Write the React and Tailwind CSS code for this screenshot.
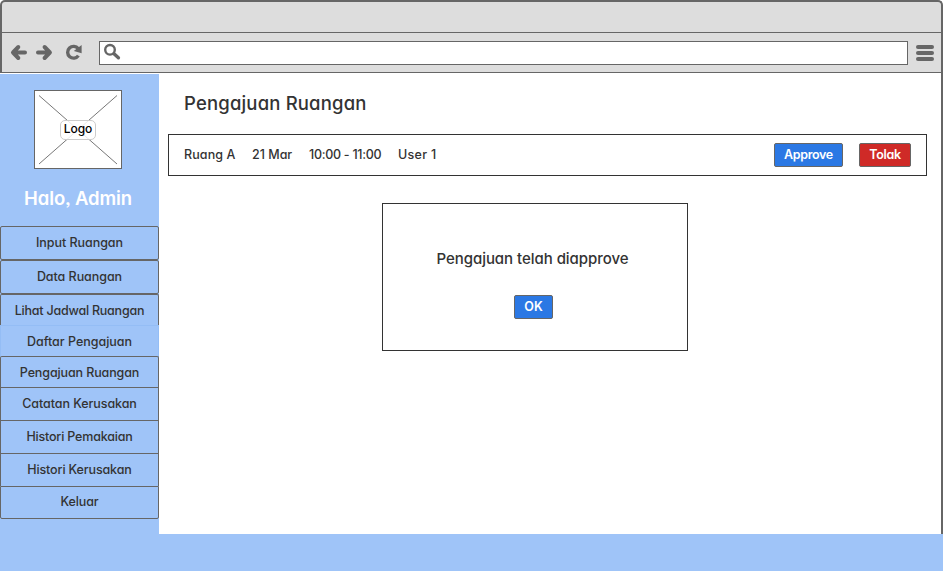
const menuItems = [
  { label: 'Input Ruangan', box: 'h-[34px] border-y border-[#666] rounded-[2px]', text: 'tracking-[-0.05px]' },
  { label: 'Data Ruangan', box: 'h-[34px] border-y border-[#666] rounded-[2px]', text: 'tracking-[-0.05px]' },
  { label: 'Lihat Jadwal Ruangan', box: 'h-[31px] border-t border-[#666] rounded-t-[2px] pt-[2px]', text: 'tracking-[-0.22px]' },
  { label: 'Daftar Pengajuan', box: 'h-[31px] border-t border-[#94bdf5] pt-[2px]', text: 'tracking-[-0.02px]' },
  { label: 'Pengajuan Ruangan', box: 'h-[31px] border-t border-[#666] rounded-t-[2px] pt-[2px]', text: 'tracking-[-0.12px]' },
  { label: 'Catatan Kerusakan', box: 'h-[33px] border-t border-[#666]', text: 'tracking-[-0.06px]' },
  { label: 'Histori Pemakaian', box: 'h-[33px] border-t border-[#666]', text: 'tracking-[-0.18px]' },
  { label: 'Histori Kerusakan', box: 'h-[33px] border-t border-[#666]', text: 'tracking-[-0.13px]' },
  { label: 'Keluar', box: 'h-[33px] border-y border-[#666] rounded-b-[2px] pb-[1px]', text: 'tracking-[-0.1px]' },
];

function BrowserBar() {
  return (
    <header className="h-[73px] shrink-0 rounded-t-[5px] border-x-2 border-t-2 border-[#666] bg-[#ddd]">
      <div className="h-[31px] border-b border-[#666]" />
      <div className="flex h-10 items-center border-b border-[#666] pl-[8px] pr-[7px]">
        <svg width="18" height="18" viewBox="0 0 18 18" fill="none" stroke="#666" strokeWidth="4" strokeLinecap="round" strokeLinejoin="round">
          <path d="M8.3 3 3 8.5l5.3 5.5M4 8.5h11" />
        </svg>
        <svg className="ml-[7px]" width="18" height="18" viewBox="0 0 18 18" fill="none" stroke="#666" strokeWidth="4" strokeLinecap="round" strokeLinejoin="round">
          <path d="M9.6 3l5.3 5.5L9.6 14M14 8.5H3" />
        </svg>
        <svg className="ml-[12px]" width="18" height="18" viewBox="0 0 18 18">
          <path d="M13.2 4.6A5.9 5.9 0 1 0 13.4 11.6" fill="none" stroke="#666" strokeWidth="3.4" />
          <path d="M16.6 1v8.2L8.8 7z" fill="#666" />
        </svg>
        <div className="ml-[16px] flex h-6 flex-1 items-center border border-[#666] bg-white pl-[4px]">
          <svg className="-mt-px" width="18" height="18" viewBox="0 0 18 18" fill="none" stroke="#666">
            <circle cx="6" cy="6.8" r="4.8" strokeWidth="2.4" />
            <path d="m10 10.8 4.4 4" strokeWidth="3.4" strokeLinecap="round" />
          </svg>
        </div>
        <div className="ml-[8px] flex w-[18px] flex-col gap-[2px]">
          <span className="h-1 rounded-[2px] bg-[#666]" />
          <span className="h-1 rounded-[2px] bg-[#666]" />
          <span className="h-1 rounded-[2px] bg-[#666]" />
        </div>
      </div>
    </header>
  );
}

function Logo() {
  return (
    <div className="relative mx-auto mt-[16px] flex h-[79px] w-[88px] items-center justify-center border border-[#666] bg-white">
      <svg className="absolute inset-0" width="86" height="77" viewBox="0 0 86 77" stroke="#777" fill="none">
        <path d="M4 4.5 82 73M82 4.5 4 73" />
      </svg>
      <span className="relative flex h-5 w-9 items-center justify-center rounded-[5px] border border-[#ccc] bg-white/85 pb-[2px] text-[12px] font-medium text-black">
        Logo
      </span>
    </div>
  );
}

function Sidebar() {
  return (
    <aside className="w-[159px] bg-[#9fc4f8]">
      <div className="w-[156px]"><Logo /></div>
      <h2 className="mt-[17px] h-[24px] whitespace-nowrap pr-[3px] text-center text-[18.5px] leading-[24px] font-semibold tracking-[-0.12px] text-white">Halo, Admin</h2>
      <nav className="mt-[16px]">
        {menuItems.map((item) => (
          <a key={item.label} className={'flex items-center justify-center border-x whitespace-nowrap text-[12.5px] font-medium ' + item.box}>
            <span className={item.text}>{item.label}</span>
          </a>
        ))}
      </nav>
    </aside>
  );
}

export default function App() {
  return (
    <div className="flex h-[571px] w-[943px] flex-col overflow-hidden bg-[#9fc4f8] font-['Inter',sans-serif] text-[#333] [font-feature-settings:'cv11','ss03']">
      <div className="flex h-[534px] flex-col bg-white">
        <BrowserBar />
        <div className="flex flex-1 border-r-2 border-[#666]">
          <div className="mt-px flex"><Sidebar /></div>
          <main className="flex-1 pr-[14px] pl-[9px]">
            <h1 className="mt-[18px] h-6 pl-[16px] text-[18.5px] leading-6 font-[450] tracking-[0.17px]">Pengajuan Ruangan</h1>
            <section className="mt-[19px] flex h-[42px] items-center border border-[#333] pr-[15px] pl-[15px] text-[12.5px] font-medium">
              <span className="w-[68px] tracking-[0.1px]">Ruang A</span>
              <span className="w-[57px]">21 Mar</span>
              <span className="w-[89px] tracking-[-0.28px]">10:00 - 11:00</span>
              <span className="tracking-[0.3px]">User 1</span>
              <button className="ml-auto h-6 w-[69px] rounded-[2px] border border-[#666] bg-[#2b78e4] text-[12.5px] font-semibold tracking-[-0.35px] text-white">Approve</button>
              <button className="ml-4 h-6 w-[52px] rounded-[2px] border border-[#666] bg-[#cf2a27] text-[12.5px] font-semibold tracking-[-0.3px] text-white">Tolak</button>
            </section>
            <section className="mt-[27px] ml-[214px] flex h-[148px] w-[306px] flex-col items-center border border-[#333] pt-[45px]">
              <p className="mr-[5px] h-5 text-[15px] leading-5 font-[450] tracking-[-0.04px]">Pengajuan telah diapprove</p>
              <button className="mt-[26px] mr-[3px] h-6 w-[39px] rounded-[2px] border border-[#666] bg-[#2b78e4] text-[12.5px] font-semibold text-white">OK</button>
            </section>
          </main>
        </div>
      </div>
    </div>
  );
}
